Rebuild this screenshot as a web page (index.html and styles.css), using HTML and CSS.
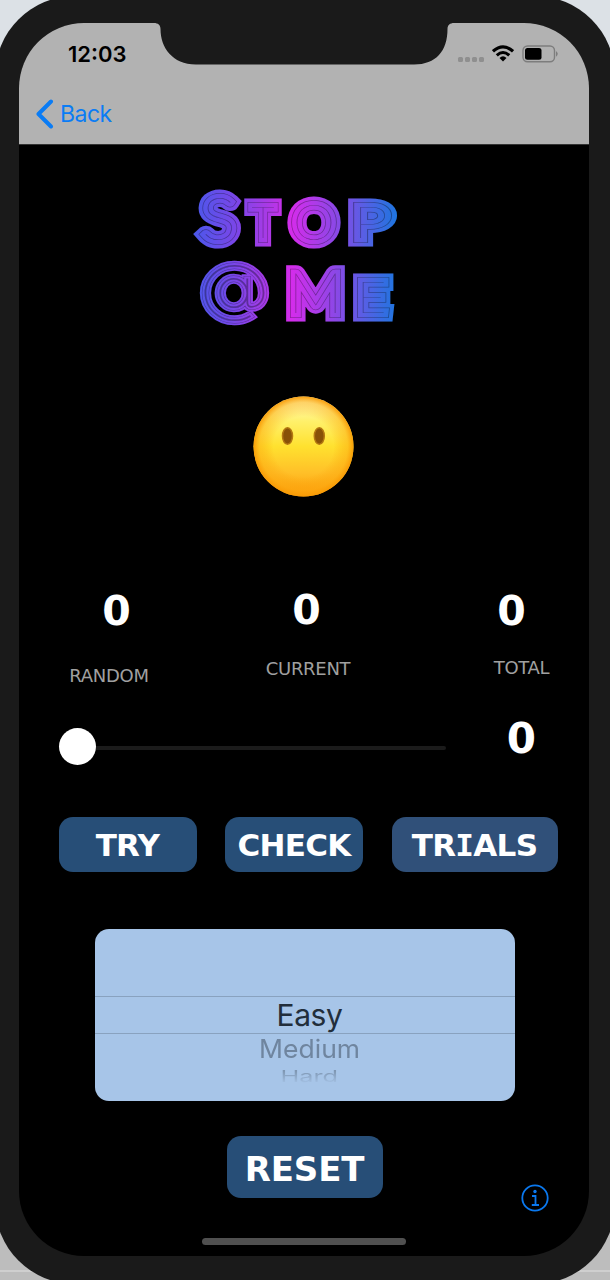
FILE: index.html
```html
<!DOCTYPE html>
<html lang="en">
<head>
<meta charset="utf-8">
<title>Stop @ Me</title>
<link rel="stylesheet" href="styles.css">
</head>
<body>
<div class="device">
  <div class="screen">
    <header class="top">
      <svg class="notch" viewBox="0 0 300 42" width="300" height="42"><path d="M0 0H300C296 0 293.500 2 293.500 6C293.500 28 282 41.500 260 41.500H42C18 41.500 6.500 24 6.500 6C6.500 2 4 0 0 0Z" fill="#1a1a1a"/></svg>
      <div class="status">
        <span class="time">12:03</span>
        <div class="indicators">
          <span class="dots"><i></i><i></i><i></i><i></i></span>
          <svg class="wifi" width="22" height="17" viewBox="0 0 22 17"><g fill="none" stroke="#000" stroke-width="3.100"><path d="M1 6.300Q11-2.500 21 6.300"/><path d="M4.800 10.300Q11 4.700 17.200 10.300"/></g><path d="M7.500 12.900Q11 9.800 14.500 12.900L11 16.500Z"/></svg>
          <svg class="battery" width="37" height="18" viewBox="0 0 37 18"><rect x="1" y="1" width="31.500" height="15.700" rx="4.500" fill="none" stroke="#7d7d7d" stroke-width="1.400"/><rect x="3" y="3" width="16.500" height="11.800" rx="2.500"/><path d="M34 6Q37.500 8.800 34 11.700Z" fill="#7d7d7d"/></svg>
        </div>
      </div>
      <nav class="back"><svg width="18" height="30" viewBox="0 0 18 30"><path d="M15 2.500L2.500 15L15 27.500" fill="none" stroke="#0a7cf5" stroke-width="4" stroke-linecap="round" stroke-linejoin="round"/></svg><span>Back</span></nav>
    </header>
    <main>
      <svg class="logo" width="230" height="160" viewBox="180 175 230 160">
        <defs>
          <linearGradient id="neon" gradientUnits="userSpaceOnUse" x1="193" y1="0" x2="398" y2="0">
            <stop offset="0" stop-color="#4a58ea"/><stop offset=".22" stop-color="#7d45e8"/><stop offset=".36" stop-color="#a83ae6"/><stop offset=".48" stop-color="#d42ceb"/><stop offset=".7" stop-color="#8a48e6"/><stop offset=".84" stop-color="#5560e4"/><stop offset="1" stop-color="#1c76df"/>
          </linearGradient>
          <mask id="lines" maskUnits="userSpaceOnUse" x="180" y="175" width="230" height="160">
            <g class="cap wide"><use href="#word"/></g>
            <g class="cap groove"><use href="#word"/></g>
            <g class="cap inner"><use href="#word"/></g>
            <g class="cap core"><use href="#word"/></g>
            <g class="cap at wide"><use href="#sign"/></g>
            <g class="cap at groove"><use href="#sign"/></g>
            <g class="cap at inner"><use href="#sign"/></g>
            <g class="cap at core"><use href="#sign"/></g>
          </mask>
          <g id="word"><text x="202" y="240" font-size="60" textLength="34" lengthAdjust="spacingAndGlyphs">S</text><text x="251.500" y="238" font-size="44" textLength="23" lengthAdjust="spacingAndGlyphs">T</text><text x="293" y="239.500" font-size="49" textLength="42" lengthAdjust="spacingAndGlyphs">O</text><text x="353" y="238" font-size="44" textLength="35" lengthAdjust="spacingAndGlyphs">P</text><text x="288.500" y="313" font-size="55" textLength="54" lengthAdjust="spacingAndGlyphs">M</text><text x="357" y="313" font-size="44" textLength="29.500" lengthAdjust="spacingAndGlyphs">E</text></g>
          <g id="sign"><text x="199.500" y="309" font-size="63" textLength="70" lengthAdjust="spacingAndGlyphs">@</text></g>
        </defs>
        <rect x="180" y="175" width="230" height="160" fill="url(#neon)" mask="url(#lines)"/>
      </svg>
      <svg class="face" width="102" height="102" viewBox="0 0 102 102">
        <defs>
          <linearGradient id="skin" x1="0" y1="0" x2="0" y2="1"><stop offset="0" stop-color="#fffbc8"/><stop offset=".25" stop-color="#fff06a"/><stop offset=".5" stop-color="#ffe12f"/><stop offset=".76" stop-color="#ffc028"/><stop offset="1" stop-color="#fd9d0a"/></linearGradient>
          <radialGradient id="rim"><stop offset=".6" stop-color="#f99500" stop-opacity="0"/><stop offset=".88" stop-color="#fca50c" stop-opacity=".45"/><stop offset="1" stop-color="#f89a05" stop-opacity=".95"/></radialGradient>
        </defs>
        <circle cx="50.500" cy="50.500" r="50" fill="url(#skin)"/><circle cx="50.500" cy="50.500" r="50" fill="url(#rim)"/>
        <g fill="#885107" stroke="#b27611" stroke-width="1.500"><ellipse cx="34.500" cy="40" rx="5" ry="8.300"/><ellipse cx="66.300" cy="40" rx="5" ry="8.300"/></g>
      </svg>
      <section class="scores">
        <div class="score random"><b>0</b><span>RANDOM</span></div>
        <div class="score current"><b>0</b><span>CURRENT</span></div>
        <div class="score total"><b>0</b><span>TOTAL</span></div>
      </section>
      <section class="slider-row"><div class="slider"><i class="thumb"></i><i class="track"></i></div><b>0</b></section>
      <section class="actions"><button class="btn">TRY</button><button class="btn">CHECK</button><button class="btn trials">TR<span class="serif-i">I</span>ALS</button></section>
      <section class="picker"><div class="easy"><span>Easy</span></div><div class="medium"><span>Medium</span></div><div class="hard"><span>Hard</span></div></section>
      <button class="btn reset">RESET</button>
      <svg class="info" width="28" height="28" viewBox="0 0 28 28"><circle cx="14" cy="14" r="12.700" fill="none" stroke="#0a78ee" stroke-width="1.800"/><circle cx="14" cy="7.500" r="1.700" fill="#0a78ee"/><path d="M11 12H14.500V21M10.800 21H18" fill="none" stroke="#0a78ee" stroke-width="1.800"/></svg>
      <div class="home"></div>
    </main>
  </div>
</div>
</body>
</html>
```
FILE: styles.css
```css
* { box-sizing: border-box; }
body { margin: 0; width: 610px; height: 1280px; overflow: hidden; background: linear-gradient(#dce1e6 0, #dce1e6 50%, #bdbdbd 50%, #bdbdbd 1270px, #cfcfcf 1270px, #cfcfcf 1272px, #bdbdbd 1272px); font-family: Inter, sans-serif; }
.device { width: 620px; height: 1288px; margin: -4px 0 0 -5px; padding: 27px 26px 28px 24px; border-radius: 80px; background: #1a1a1a; display: flow-root; }
.screen { width: 570px; height: 1233px; background: #000; border-radius: 65px; overflow: hidden; }
.top { position: relative; height: 122px; background: #b2b2b2; border-bottom: 1px solid #333; }
.notch { position: absolute; left: 135px; top: 0; }
.status { display: flex; justify-content: space-between; padding: 18px 30px 0 49px; height: 76px; }
.time { font-size: 22px; line-height: 27px; font-weight: 600; letter-spacing: 0; }
.indicators { display: flex; }
.dots { display: flex; gap: 2px; padding-top: 16px; margin-right: 8px; }
.dots i { width: 5px; height: 5px; border-radius: 1.500px; background: #8f8f8f; }
.wifi { margin: 4px 8px 0 0; }
.battery { margin-top: 4px; }
.back { display: flex; align-items: center; height: 30px; padding-left: 17px; gap: 6px; color: #0a7cf5; font-size: 23px; letter-spacing: -.5px; }
main { display: flex; flex-direction: column; height: 1111px; }
.logo { margin: 30px 0 0 161px; flex: none; }
.cap { font-family: Lato, sans-serif; font-weight: 100; stroke-miterlimit: 1.500; }
.wide { fill: #fff; stroke: #fff; stroke-width: 17px; }
.groove { fill: #aaa; stroke: #aaa; stroke-width: 10px; }
.inner { fill: #fff; stroke: #fff; stroke-width: 8.500px; }
.core { fill: #aaa; stroke: #aaa; stroke-width: .1px; }
.at { font-family: Inter, sans-serif; }
.at.wide { stroke-width: 8.500px; }
.at.groove { stroke-width: 5px; }
.at.inner { stroke-width: 4px; }
.face { margin: 61px 0 0 234px; flex: none; }
.scores { display: grid; grid-template-columns: 180px 218px 172px; height: 102px; margin-top: 89px; }
.score { display: flex; flex-direction: column; align-items: center; }
b { font: bold 41px/48px "DejaVu Sans", sans-serif; color: #fff; }
.score span { font: 18px/22px "DejaVu Sans", sans-serif; color: #a0a0a0; letter-spacing: -.3px; }
.random b { margin: 0 0 30px 15px; }
.current b { margin: -1px 0 24px -3px; }
.total b { margin: 0 0 22px 17px; }
.total span { margin-left: 37px; }
.slider-row { display: flex; height: 50px; padding: 0 53px 0 40px; justify-content: space-between; margin-top: 26px; }
.slider { display: flex; align-items: center; width: 387px; height: 37px; margin-top: 13px; }
.slider-row b { font-size: 42px; }
.thumb { width: 37px; height: 37px; border-radius: 50%; background: #fff; }
.track { flex: 1; height: 4px; margin-top: 2px; background: #1b1b1b; border-radius: 0 2px 2px 0; }
.actions { display: grid; grid-template-columns: 138px 138px 166px; gap: 28.500px; height: 55px; margin: 52px 0 0 39.500px; }
.btn { border: 0; padding: 2px 0 0; border-radius: 14px; background: #274e77; color: #fff; font: bold 31px/1 "DejaVu Sans", sans-serif; letter-spacing: -.7px; }
.trials { background: #305079; }
.serif-i { font-family: "DejaVu Sans Mono", monospace; }
.picker { width: 420px; height: 172px; margin: 57px 0 0 75.500px; padding-top: 67px; border-radius: 14px; background: #a7c5e8; text-align: center; flex: none; }
.picker div { padding-left: 10px; }
.easy { height: 38px; border-top: 1px solid #89a2bf; border-bottom: 1px solid #89a2bf; font-size: 30px; line-height: 37px; color: #222e3b; letter-spacing: -.4px; }
.medium { height: 28px; font-size: 25.500px; line-height: 30px; color: #6f859f; }
.medium span { display: inline-block; transform: scaleX(1.040); }
.hard { height: 22px; line-height: 28px; font-size: 23px; }
.hard span { display: inline-block; transform: scale(1.100, .72); transform-origin: center; color: transparent; background: linear-gradient(#7e96b2 25%, #a7c5e8 90%); background-clip: text; -webkit-background-clip: text; }
.reset { width: 156px; height: 62px; margin: 35px 0 0 207.500px; font-size: 34px; letter-spacing: -.2px; padding-top: 3px; flex: none; }
.info { margin: -14px 0 0 502px; flex: none; }
.home { width: 204px; height: 7px; margin: 26px 0 0 183px; border-radius: 4px; background: #505050; flex: none; }
```
